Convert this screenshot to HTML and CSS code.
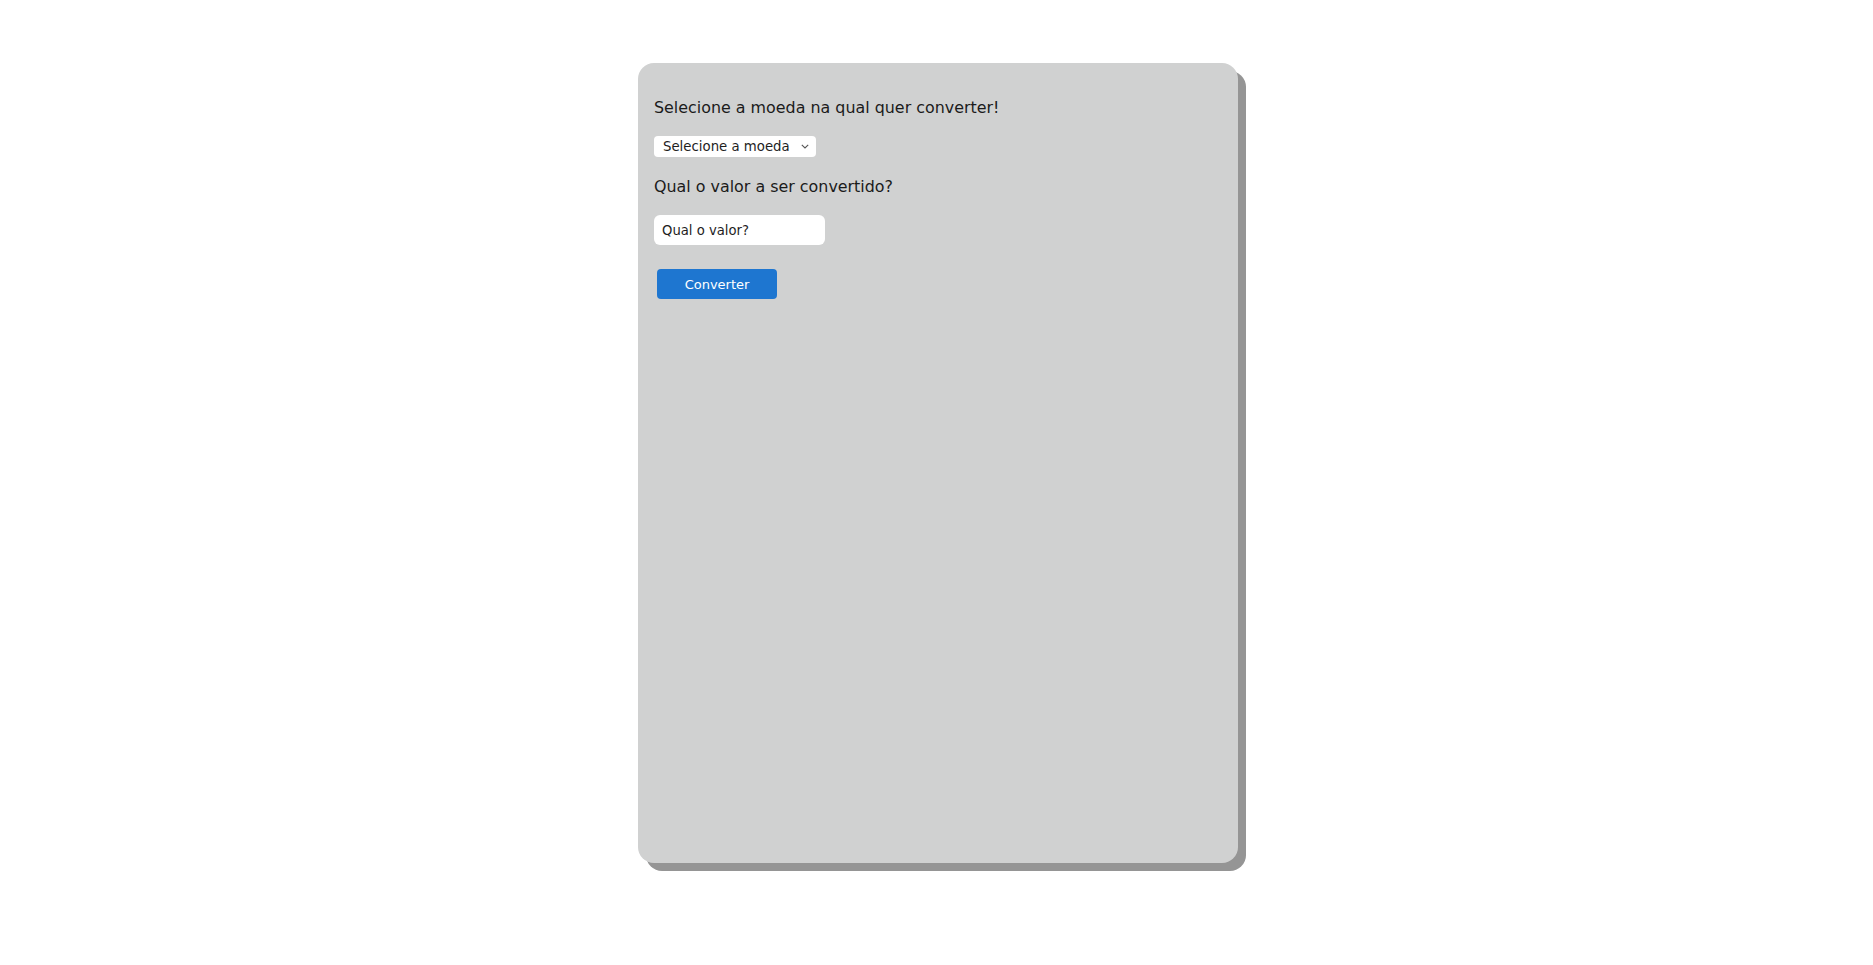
FILE: index.html
```html
<!DOCTYPE html>
<html lang="pt-BR">
<head>
<meta charset="utf-8">
<title>Conversor de moedas</title>
<link rel="stylesheet" href="styles.css">
</head>
<body>
<main class="page">
  <section class="card">
    <p class="label label-first">Selecione a moeda na qual quer converter!</p>
    <div class="select-box">
      <span class="select-text">Selecione a moeda</span>
      <svg class="chev" width="8" height="5" viewBox="0 0 8 5"><path d="M0.8 0.8 L4 3.9 L7.2 0.8" fill="none" stroke="#555" stroke-width="1.1"/></svg>
    </div>
    <p class="label label-second">Qual o valor a ser convertido?</p>
    <input class="value-input" type="text" placeholder="Qual o valor?">
    <button class="convert-btn" type="button">Converter</button>
  </section>
</main>
</body>
</html>
```
FILE: styles.css
```css
html, body {
  margin: 0;
  padding: 0;
  background: #ffffff;
}
body {
  font-family: "DejaVu Sans", "Open Sans", Arial, sans-serif;
  color: #1a1a1a;
}
.page {
  display: flex;
  justify-content: center;
  padding-top: 63px;
  padding-left: 3px;
  padding-bottom: 60px;
}
.card {
  width: 600px;
  height: 800px;
  box-sizing: border-box;
  background: #d0d1d1;
  border-radius: 16px;
  box-shadow: 8px 8px 0 #959595;
  padding: 0 16px;
  display: flex;
  flex-direction: column;
  align-items: flex-start;
}
.label {
  margin: 0;
  font-size: 15.9px;
  line-height: 20px;
  color: #1b1b1b;
}
.label-first {
  margin-top: 35px;
}
.select-box {
  margin-top: 18px;
  width: 162px;
  height: 21px;
  box-sizing: border-box;
  background: #ffffff;
  border-radius: 4px;
  display: flex;
  align-items: center;
  padding-left: 9px;
  padding-right: 7px;
  justify-content: space-between;
}
.select-text {
  font-size: 13.3px;
  color: #1e1e1e;
}
.chev {
  display: block;
}
.label-second {
  margin-top: 20px;
}
.value-input {
  margin-top: 18px;
  width: 171px;
  height: 30px;
  box-sizing: border-box;
  border: none;
  outline: none;
  border-radius: 6px;
  background: #ffffff;
  padding: 0 8px;
  font-family: inherit;
  font-size: 13.2px;
  color: #1e1e1e;
}
.value-input::placeholder {
  color: #1e1e1e;
  opacity: 1;
}
.convert-btn {
  margin-top: 24px;
  margin-left: 3px;
  width: 120px;
  height: 30px;
  border: none;
  border-radius: 4px;
  background: #1e76d0;
  color: #ffffff;
  font-family: "DejaVu Sans", Arial, sans-serif;
  font-size: 13px;
  font-weight: 500;
  padding: 0;
}
```
